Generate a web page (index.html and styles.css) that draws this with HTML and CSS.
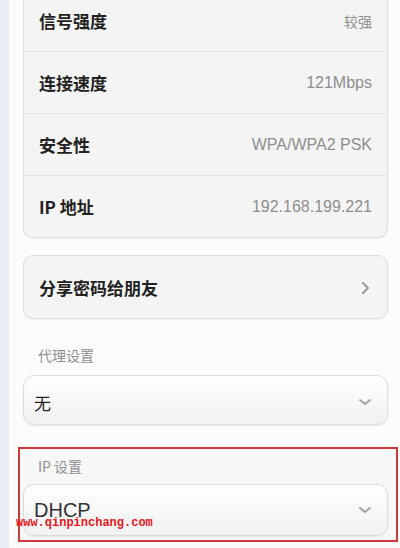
FILE: index.html
```html
<!DOCTYPE html>
<html lang="zh-CN">
<head>
    <meta charset="UTF-8">
    <meta name="viewport" content="width=device-width, initial-scale=1.0">
    <title>WLAN 详情</title>
    <link rel="stylesheet" href="styles.css">
</head>
<body>
    <div class="page">
        <div class="card info">
            <div class="row"><span class="name">信号强度</span><span class="value cn">较强</span></div>
            <div class="row"><span class="name">连接速度</span><span class="value">121Mbps</span></div>
            <div class="row"><span class="name">安全性</span><span class="value">WPA/WPA2 PSK</span></div>
            <div class="row"><span class="name">IP 地址</span><span class="value">192.168.199.221</span></div>
        </div>

        <div class="card share">
            <div class="row">
                <span class="name">分享密码给朋友</span>
                <svg class="arrow" width="10" height="14" viewBox="0 0 10 14"><path d="M3 2l5 5-5 5" fill="none" stroke="#979797" stroke-width="2" stroke-linecap="round" stroke-linejoin="round"/></svg>
            </div>
        </div>

        <div class="field">
            <p class="label">代理设置</p>
            <div class="select small">
                <span>无</span>
                <svg class="down" width="14" height="10" viewBox="0 0 14 10"><path d="M2 3l5 4 5-4" fill="none" stroke="#a2a2a2" stroke-width="2" stroke-linecap="round" stroke-linejoin="round"/></svg>
            </div>
        </div>

        <div class="field marked">
            <p class="label">IP 设置</p>
            <div class="select big">
                <span>DHCP</span>
                <svg class="down" width="14" height="10" viewBox="0 0 14 10"><path d="M2 3l5 4 5-4" fill="none" stroke="#a2a2a2" stroke-width="2" stroke-linecap="round" stroke-linejoin="round"/></svg>
            </div>
        </div>

        <div class="stamp">www.qinpinchang.com</div>
    </div>
</body>
</html>
```

FILE: styles.css
```css
html, body {
    margin: 0;
    height: 100%;
    overflow: hidden;
}
body {
    font-family: "Noto Sans CJK SC", "Liberation Sans", sans-serif;
    background-color: #fafafa;
    border-left: 9px solid #e9eef5;
    box-sizing: border-box;
}
.page {
    position: relative;
    height: 100%;
    padding: 0 12px 0 14px;
    background-color: #fcfcfc;
}
.card {
    background-color: #f4f4f4;
    border: 1px solid #dedede;
    border-radius: 10px;
    box-shadow: 0 1px 2px rgba(0, 0, 0, 0.06);
}
.info {
    margin-top: -11px;
}
.row {
    display: flex;
    align-items: center;
    justify-content: space-between;
    height: 61px;
    padding: 0 15px;
    border-top: 1px solid #e2e2e2;
}
.row:first-child {
    border-top: none;
}
.name {
    font-size: 17px;
    font-weight: bold;
    color: #222;
}
.value {
    font-family: "Liberation Sans", "Noto Sans CJK SC", sans-serif;
    font-size: 16px;
    color: #8e8e8e;
}
.value.cn {
    font-family: "Noto Sans CJK SC", sans-serif;
    font-size: 14px;
}
.share {
    margin-top: 17px;
}
.share .row {
    padding-top: 1px;
}
.arrow {
    margin-right: 2px;
}
.field {
    margin-top: 26px;
}
.field .label {
    margin: 0 0 10px;
    padding-left: 15px;
    font-size: 14px;
    color: #8f8f8f;
    line-height: 20px;
}
.select {
    display: flex;
    align-items: center;
    justify-content: space-between;
    box-sizing: border-box;
    padding: 0 15px 0 10px;
    background: linear-gradient(#ffffff, #f1f1f1);
    border: 1px solid #dcdcdc;
    border-radius: 11px;
    box-shadow: 0 1px 2px rgba(0, 0, 0, 0.08);
    color: #222;
}
.select.small {
    height: 50px;
    padding-top: 4px;
    font-size: 17px;
}
.select.big {
    height: 52px;
    font-family: "Liberation Sans", sans-serif;
    font-size: 20px;
    color: #333;
}
.marked {
    margin: 22px -10px 0 -5px;
    padding: 7px 8px 4px 3px;
    border: 2px solid #c8383c;
    background-color: #f7f7f7;
}
.marked .label {
    margin-bottom: 8px;
}
.stamp {
    position: absolute;
    left: 7px;
    top: 527px;
    font-family: "Liberation Mono", monospace;
    font-size: 12px;
    line-height: 14px;
    font-weight: bold;
    color: #e8161b;
}
```
